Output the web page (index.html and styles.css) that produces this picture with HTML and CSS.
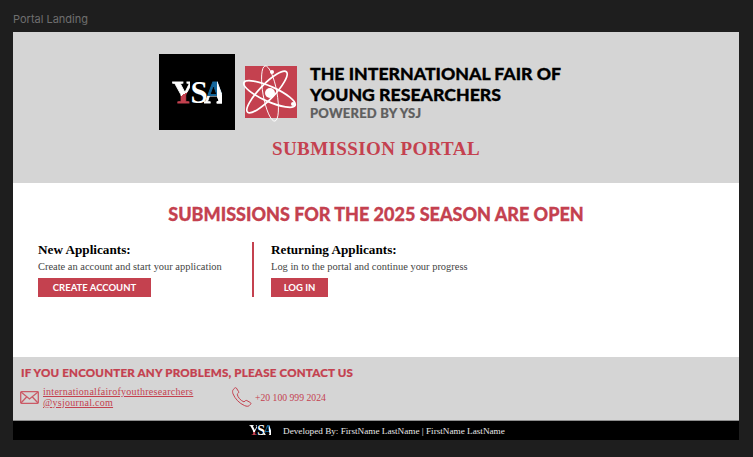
FILE: index.html
```html
<!DOCTYPE html>
<html lang="en">
<head>
<meta charset="utf-8">
<title>Portal Landing</title>
<link rel="stylesheet" href="styles.css">
</head>
<body>
<div class="frame-label">Portal Landing</div>
<main class="frame">
  <header class="hero">
    <div class="brand">
      <div class="ysa-tile"><span class="ysa ysa-large"><span class="l-y">Y</span><span class="l-s">S</span><span class="l-a">A</span></span></div>
      <svg class="atom" viewBox="0 0 52 52" aria-hidden="true">
        <rect x="0" y="0" width="52" height="52" fill="#c4414f"/>
        <g fill="none" stroke="#fff">
          <ellipse cx="24.5" cy="28" rx="28" ry="7.5" transform="rotate(24 24.5 28)" stroke-width="1.7"/>
          <ellipse cx="25" cy="27.5" rx="28" ry="7" transform="rotate(80 25 27.5)" stroke-width="0.9"/>
          <ellipse cx="22" cy="26" rx="28" ry="7.5" transform="rotate(-46 22 26)" stroke-width="1.7"/>
        </g>
        <circle cx="25" cy="27" r="5" fill="#fff"/>
        <circle cx="27" cy="6" r="2" fill="#fff"/>
        <circle cx="48" cy="38" r="2" fill="#fff"/>
      </svg>
      <div class="brand-text">
        <div class="brand-title">THE INTERNATIONAL FAIR OF<br>YOUNG RESEARCHERS</div>
        <div class="brand-sub">POWERED BY YSJ</div>
      </div>
    </div>
    <h1 class="portal-title">SUBMISSION PORTAL</h1>
  </header>

  <section class="content">
    <h2 class="season">SUBMISSIONS FOR THE 2025 SEASON ARE OPEN</h2>
    <div class="paths">
      <div class="path path-new">
        <h3 class="path-title">New Applicants:</h3>
        <p class="path-text">Create an account and start your application</p>
        <a class="btn btn-wide" href="#">CREATE ACCOUNT</a>
      </div>
      <div class="path path-return">
        <h3 class="path-title">Returning Applicants:</h3>
        <p class="path-text">Log in to the portal and continue your progress</p>
        <a class="btn btn-narrow" href="#">LOG IN</a>
      </div>
    </div>
  </section>

  <section class="contact">
    <h2 class="contact-title">IF YOU ENCOUNTER ANY PROBLEMS, PLEASE CONTACT US</h2>
    <div class="contact-row">
      <div class="contact-item contact-mail">
        <svg class="icon-mail" viewBox="0 0 19 13" aria-hidden="true">
          <rect x="0.7" y="0.7" width="17.6" height="11.6" rx="0.8"/>
          <path d="M1 1 L9.5 8 L18 1 M1 12 L6.8 5.8 M18 12 L12.2 5.8"/>
        </svg>
        <a class="mail-link" href="#">internationalfairofyouthresearchers<br>@ysjournal.com</a>
      </div>
      <div class="contact-item">
        <svg class="icon-phone" viewBox="0 0 20 20" aria-hidden="true">
          <path d="M1.2 2.6 L2.8 1 C3.4 0.5 4 0.6 4.4 1.1 L6.6 4.6 C6.9 5.1 6.8 5.6 6.4 6 L5.2 7.2 C5.8 10.4 8.6 13.6 12 14.9 L13.4 13.7 C13.9 13.3 14.4 13.3 14.9 13.6 L18.4 15.6 C19 16 19.1 16.6 18.6 17.2 L17.2 18.6 C16.2 19.6 14.6 19.4 12.6 18.6 C7.4 16.4 3 11.8 1 6.8 C0.4 5 0.4 3.6 1.2 2.6 Z"/>
        </svg>
        <span class="phone">+20 100 999 2024</span>
      </div>
    </div>
  </section>

  <footer class="credits">
    <span class="ysa ysa-small"><span class="l-y">Y</span><span class="l-s">S</span><span class="l-a">A</span></span>
    <span class="credits-text">Developed By: FirstName LastName | FirstName LastName</span>
  </footer>
</main>
</body>
</html>
```
FILE: styles.css
```css
* { box-sizing: border-box; }
html, body { margin: 0; padding: 0; }
body {
  width: 753px;
  height: 457px;
  background: #1e1e1e;
  overflow: hidden;
  font-family: "Liberation Serif", serif;
  padding: 13px 14px 0 13px;
}
.frame-label {
  height: 19px;
  font: 400 11px/12px Inter, sans-serif;
  color: #6f6f6f;
}
.frame {
  width: 726px;
  height: 408px;
  display: flex;
  flex-direction: column;
  background: #fff;
}
.hero {
  height: 151px;
  background: #d5d5d5;
  padding-top: 22px;
  display: flex;
  flex-direction: column;
  align-items: center;
}
.brand {
  display: flex;
  align-items: center;
  align-self: flex-start;
  margin-left: 146px;
}
.ysa-tile {
  width: 76px;
  height: 76px;
  background: #000;
  display: flex;
  align-items: center;
  justify-content: center;
  flex: none;
}
.ysa {
  font-family: "Liberation Serif", serif;
  font-weight: 700;
  display: inline-flex;
  color: #fff;
}
.ysa-large { font-size: 31px; line-height: 31px; letter-spacing: -4px; -webkit-text-stroke: 0.8px transparent; }
.ysa-small { font-size: 14px; line-height: 14px; letter-spacing: -2px; }
.l-y {
  background: linear-gradient(150deg, #fff 58%, #c4414f 58%);
  -webkit-background-clip: text;
  background-clip: text;
  color: transparent;
}
.l-s { color: #fff; }
.l-a {
  background:
    linear-gradient(to right, transparent 72%, #fff 72%),
    linear-gradient(to bottom, #14679e 62%, #fff 62%);
  -webkit-background-clip: text;
  background-clip: text;
  color: transparent;
}
.atom {
  width: 52px;
  height: 52px;
  margin-left: 10px;
  flex: none;
  overflow: visible;
}
.brand-text { margin-left: 13px; }
.brand-title {
  font: 900 17.7px/21px Lato, sans-serif;
  color: #000;
  white-space: nowrap;
  -webkit-text-stroke: 0.3px #000;
}
.brand-sub {
  font: 900 13px/17px Lato, sans-serif;
  color: #5f5f5f;
  letter-spacing: 0.2px;
  -webkit-text-stroke: 0.2px #5f5f5f;
}
.portal-title {
  margin: 7px 0 0;
  font: 700 19px/24px "Liberation Serif", serif;
  color: #c4414f;
  letter-spacing: 0.4px;
}
.content {
  height: 174px;
  padding: 20px 25px 0;
}
.season {
  margin: 0;
  text-align: center;
  font: 900 18px/22px Lato, sans-serif;
  color: #c4414f;
  -webkit-text-stroke: 0.3px #c4414f;
}
.paths {
  display: flex;
  margin-top: 17px;
}
.path-new {
  width: 216px;
  height: 55px;
  border-right: 2px solid #c4414f;
}
.path-return { padding-left: 17px; }
.path-title {
  margin: 0;
  font: 700 13.2px/16px "Liberation Serif", serif;
  color: #000;
}
.path-text {
  margin: 2px 0 5px;
  font: 400 10.45px/13px "Liberation Serif", serif;
  color: #444;
}
.btn {
  display: block;
  height: 19px;
  background: #c4414f;
  color: #fff;
  font: 700 9.5px/19px Lato, sans-serif;
  text-align: center;
  text-decoration: none;
}
.btn-wide { width: 113px; }
.btn-narrow { width: 57px; }
.contact {
  height: 64px;
  background: #d5d5d5;
  padding: 8px 8px 0;
  border-bottom: 1px solid #8d8d8d;
}
.contact-title {
  margin: 0;
  font: 900 11.55px/15px Lato, sans-serif;
  color: #c4414f;
  letter-spacing: 0.2px;
  -webkit-text-stroke: 0.2px #c4414f;
}
.contact-row {
  display: flex;
  align-items: center;
  margin-top: 6px;
  color: #c4414f;
  font: 400 10px/11px "Liberation Serif", serif;
}
.contact-item { display: flex; align-items: center; }
.contact-mail { width: 211px; }
.icon-mail {
  width: 19px;
  height: 13px;
  margin-left: -1px;
  margin-right: 4px;
  fill: none;
  stroke: #cb5a66;
  stroke-width: 1.3;
}
.mail-link { color: #c4414f; letter-spacing: 0.28px; }
.icon-phone {
  width: 20px;
  height: 20px;
  margin-right: 3px;
  fill: none;
  stroke: #c4414f;
  stroke-width: 1;
}
.phone { font-size: 9.7px; }
.credits {
  height: 19px;
  background: #000;
  display: flex;
  align-items: center;
  padding-left: 236px;
  color: #e8e8e8;
}
.credits-text {
  margin-left: 12px;
  font: 400 9.2px/12px "Liberation Serif", serif;
}
```
